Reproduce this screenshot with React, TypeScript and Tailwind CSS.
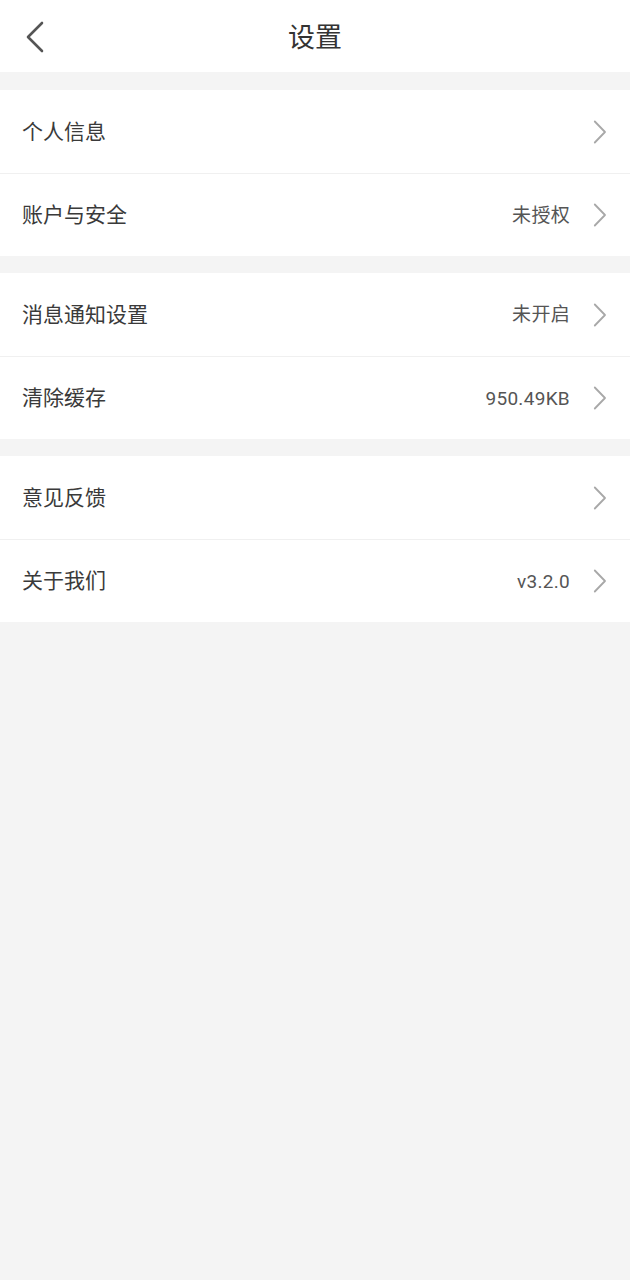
const groups: { label: string; value?: string }[][] = [
  [{ label: '个人信息' }, { label: '账户与安全', value: '未授权' }],
  [
    { label: '消息通知设置', value: '未开启' },
    { label: '清除缓存', value: '950.49KB' },
  ],
  [{ label: '意见反馈' }, { label: '关于我们', value: 'v3.2.0' }],
];

function Chevron() {
  return (
    <svg width="14" height="24" viewBox="0 0 14 24" fill="none" className="shrink-0">
      <path d="M1.8 1.5 L12 12 L1.8 22.5" stroke="#a8a8a8" strokeWidth="1.8" strokeLinecap="round" strokeLinejoin="round" />
    </svg>
  );
}

export default function App() {
  return (
    <div
      className="flex min-h-[1280px] w-[630px] flex-col bg-[#f4f4f4]"
      style={{ fontFamily: 'Roboto, "Noto Sans CJK SC", sans-serif' }}
    >
      <header className="relative flex h-[72px] items-center justify-center bg-white pt-[4px]">
        <button className="absolute left-[24px] top-[21px]">
          <svg width="22" height="32" viewBox="0 0 22 32" fill="none">
            <path d="M18 2 L4 16 L18 30" stroke="#555" strokeWidth="2.6" strokeLinecap="round" strokeLinejoin="round" />
          </svg>
        </button>
        <h1 className="text-[27px] leading-none text-[#333]">设置</h1>
      </header>

      <div className="flex flex-col gap-[17px] pt-[18px]">
        {groups.map((rows, gi) => (
          <div key={gi} className="flex flex-col bg-white">
            {rows.map((row, ri) => (
              <div
                key={row.label}
                className={`flex h-[83px] items-center pl-[22px] pr-[23px] ${ri > 0 ? 'border-t border-[#f0f0f0]' : ''}`}
              >
                <span className="flex-1 pt-[2px] text-[21px] text-[#3a3a3a]">{row.label}</span>
                {row.value && (
                  <span className="mr-[23px] pt-[2px] text-[19px] tracking-[0.3px] text-[#555]">{row.value}</span>
                )}
                <Chevron />
              </div>
            ))}
          </div>
        ))}
      </div>
    </div>
  );
}
